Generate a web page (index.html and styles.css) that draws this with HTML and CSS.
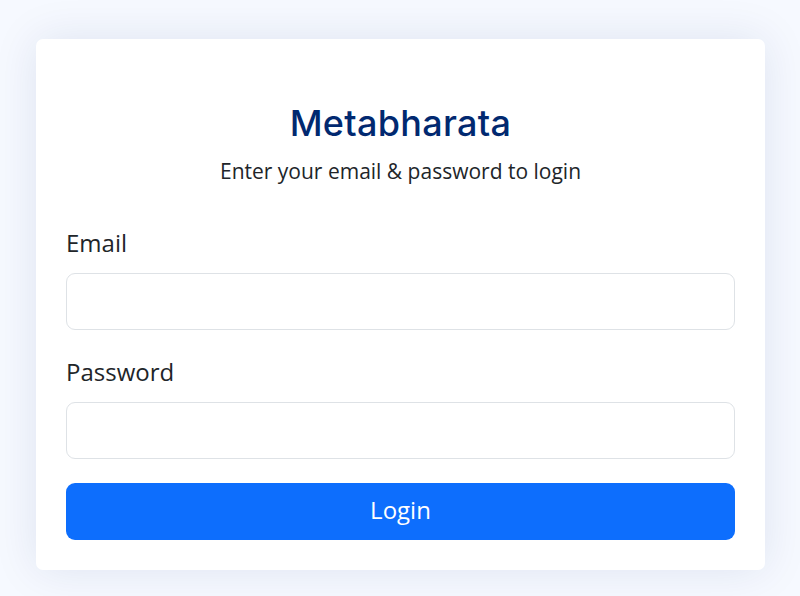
FILE: index.html
```html
<!DOCTYPE html>
<html lang="en">
<head>
<meta charset="utf-8">
<title>Metabharata - Login</title>
<link rel="stylesheet" href="styles.css">
</head>
<body>
<main class="page">
  <section class="card">
    <h1 class="title">Metabharata</h1>
    <p class="subtitle">Enter your email &amp; password to login</p>
    <form class="form">
      <div class="field">
        <label class="label" for="email">Email</label>
        <input class="input" id="email" type="email">
      </div>
      <div class="field">
        <label class="label" for="password">Password</label>
        <input class="input" id="password" type="password">
      </div>
      <button class="btn" type="button">Login</button>
    </form>
  </section>
</main>
</body>
</html>
```

FILE: styles.css
```css
* { box-sizing: border-box; }
html, body { margin: 0; padding: 0; }
body {
  background: #f6f9ff;
  font-family: "Open Sans", "Liberation Sans", sans-serif;
  color: #212529;
  width: 800px;
  height: 596px;
  overflow: hidden;
}
.page {
  padding: 39px 35px 0 36px;
}
.card {
  background: #fff;
  border-radius: 7px;
  box-shadow: 0 0 45px rgba(1, 41, 112, 0.1);
  padding: 63px 30px 30px;
  height: 531px;
}
.title {
  margin: 0;
  text-align: center;
  font-family: Inter, "Noto Sans", sans-serif;
  font-weight: 500;
  font-size: 36px;
  line-height: 43px;
  letter-spacing: 0.3px;
  color: #012970;
}
.subtitle {
  margin: 11px 0 0;
  text-align: center;
  font-size: 21px;
  line-height: 31.5px;
  color: #212529;
}
.form {
  margin-top: 37px;
  display: flex;
  flex-direction: column;
  gap: 24px;
}
.field {
  display: flex;
  flex-direction: column;
}
.label {
  font-size: 24px;
  line-height: 36px;
  margin-bottom: 12px;
}
.input {
  height: 57px;
  border: 1.5px solid #dee2e6;
  border-radius: 9px;
  background: #fff;
  font: inherit;
}
.btn {
  height: 57px;
  border: none;
  border-radius: 9px;
  background: #0d6efd;
  color: #fff;
  font-family: "Open Sans", "Liberation Sans", sans-serif;
  font-size: 24px;
  line-height: 36px;
  padding: 0 0 2px;
}
```
